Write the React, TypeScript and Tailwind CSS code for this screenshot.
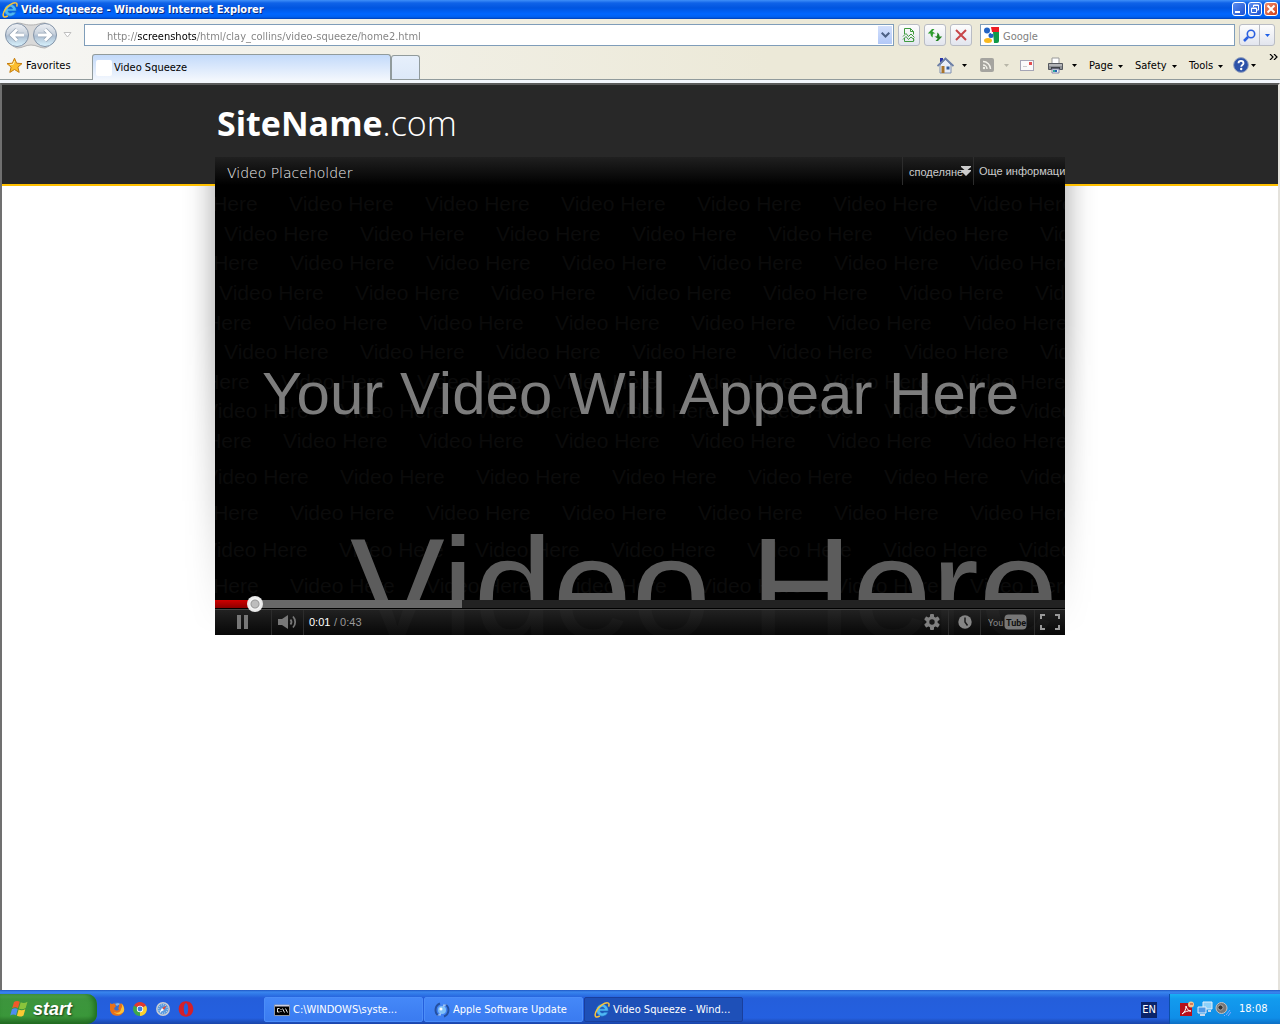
import React from "react";

const UI = "font-['DejaVu_Sans_Condensed','DejaVu_Sans',sans-serif]";

function Caret({ dim = false }: { dim?: boolean }) {
  return (
    <svg width="5" height="3" viewBox="0 0 5 3" className="shrink-0" aria-hidden="true">
      <path d="M0 0h5L2.500 3z" fill={dim ? "#b8b6a8" : "#000"} />
    </svg>
  );
}

function IeLogo({ size = 16 }: { size?: number }) {
  return (
    <svg width={size} height={size} viewBox="0 0 16 16" className="shrink-0" aria-hidden="true">
      <path d="M8.300 2.200a6 6 0 1 0 5.600 8h-3.600a2.500 2.500 0 0 1-4.300-1.200h8.300A6 6 0 0 0 8.300 2.200zM6 6.800a2.400 2.400 0 0 1 4.600 0z" fill="#4fb8f5" stroke="#1b68bd" strokeWidth=".600" />
      <path d="M14.600 4.600c.800-2 .500-3.700-1-3.800C10.400.500 5.200 4.200 2.800 8.200.900 11.400.500 14.400 2.200 15c1 .300 2.300-.300 3.600-1.200" fill="none" stroke="#f7c33c" strokeWidth="1.500" />
    </svg>
  );
}

function NavArrows() {
  return (
    <svg width="54" height="28" viewBox="0 0 54 28" aria-hidden="true">
      <defs>
        <linearGradient id="orb" x1="0" y1="0" x2="0" y2="1">
          <stop offset="0" stopColor="#eef1f5" />
          <stop offset=".45" stopColor="#c9d2dd" />
          <stop offset=".55" stopColor="#aebfd2" />
          <stop offset="1" stopColor="#d9f4ff" />
        </linearGradient>
      </defs>
      <path d="M13 2C19 2 20 4 27 4s8-2 14-2a13 13 0 0 1 0 25c-6 0-8-3-14-3s-8 3-14 3A13 13 0 0 1 13 2z" fill="#d9d9d9" stroke="#b3b3b3" />
      <circle cx="13" cy="14" r="11.500" fill="url(#orb)" stroke="#8494a8" />
      <circle cx="41" cy="14" r="11.500" fill="url(#orb)" stroke="#8494a8" />
      <path d="M20 14H8M13 8.500L7.500 14l5.500 5.500M34 14h12M41 8.500l5.500 5.500-5.500 5.500" fill="none" stroke="#94a3b4" strokeWidth="4.500" />
      <path d="M20 14H8M13 8.500L7.500 14l5.500 5.500M34 14h12M41 8.500l5.500 5.500-5.500 5.500" fill="none" stroke="#fff" strokeWidth="3" />
    </svg>
  );
}

function TitleBar() {
  const cap = "flex h-[14px] w-[14px] items-center justify-center rounded-[3px] border border-white bg-linear-to-br from-[#5a8cf0] to-[#1b4fd0]";
  return (
    <header className="flex h-[19px] shrink-0 items-center bg-[linear-gradient(#3f8ff8_0,#0f62e8_3px,#0055e0_8px,#0066ff_14px,#0060f0_17px,#0040b8)] pl-[2px] pr-[2px]">
      <IeLogo />
      <h1 className="ml-[3px] flex-1 pt-px text-[11px] leading-[18px] font-bold whitespace-nowrap text-white [text-shadow:1px_1px_0_#0a2a80]">
        Video Squeeze - Windows Internet Explorer
      </h1>
      <div className="flex gap-[2px] pb-px">
        <button aria-label="Minimize" className={cap}>
          <svg width="12" height="12" viewBox="0 0 12 12"><path d="M2 8h5v2H2z" fill="#fff" /></svg>
        </button>
        <button aria-label="Restore" className={cap}>
          <svg width="12" height="12" viewBox="0 0 12 12" fill="none" stroke="#fff"><path d="M4.500 4V2h5v5H8M2.500 5h5v4.500h-5zM4 2.500h6M2 5.500h6" /></svg>
        </button>
        <button aria-label="Close" className="flex h-[14px] w-[14px] items-center justify-center rounded-[3px] border border-white bg-linear-to-br from-[#ee8a6a] to-[#d03a10]">
          <svg width="12" height="12" viewBox="0 0 12 12"><path d="M2.500 2.500l7 7M9.500 2.500l-7 7" stroke="#fff" strokeWidth="2" /></svg>
        </button>
      </div>
    </header>
  );
}

function AddressRow() {
  const btn = "flex h-[22px] w-[22px] shrink-0 items-center justify-center rounded-[3px] border border-[#b9bcc4] bg-linear-to-b from-[#fdfdfd] to-[#e2e5ee]";
  return (
    <div className="flex h-[32px] shrink-0 items-center pr-[5px] pl-1">
      <button aria-label="Back and forward" className="shrink-0"><NavArrows /></button>
      <button aria-label="Recent pages" className="flex w-[19px] justify-center">
        <svg width="9" height="6" viewBox="0 0 9 6"><path d="M1 .500h7L4.500 5z" fill="#fff" stroke="#c0c0c0" /></svg>
      </button>
      <div className="ml-[7px] flex h-[22px] min-w-0 flex-1 items-center border border-[#7f9db9] bg-white">
        <input
          aria-label="Address"
          defaultValue="http://screenshots/html/clay_collins/video-squeeze/home2.html"
          className="h-5 min-w-0 flex-1 bg-[linear-gradient(to_right,#808080_53px,#000_53px,#000_112px,#808080_112px)] bg-clip-text pt-[2px] pl-[22px] text-[11px] text-transparent outline-none"
        />
        <button aria-label="Show address list" className="mr-px flex h-[18px] w-[14px] items-center justify-center bg-linear-to-b from-[#d3e0fc] to-[#b2c8f7]">
          <svg width="9" height="6" viewBox="0 0 9 6"><path d="M.700.700l3.800 3.800L8.300.700" fill="none" stroke="#4d6185" strokeWidth="2" /></svg>
        </button>
      </div>
      <div className="ml-1 flex gap-1">
        <button aria-label="Compatibility view" className={btn}>
          <svg width="14" height="14" viewBox="0 0 14 14" fill="none" stroke="#3f9b3f"><path d="M2.500 6V.500h6l3 3v3M8.500.500v3h3M2.500 10v3.500h9V10M1 8.500l3-3L6.500 8.500 9 6l3.500 3.500M1 11.500l3-3 2.500 3L9 9l3.500 3" /></svg>
        </button>
        <button aria-label="Refresh" className={btn}>
          <svg width="16" height="16" viewBox="0 0 16 16"><path d="M5 2L.800 6.500h2.700c0 2 .500 3 2.500 4-.800-2 0-3.200.500-4h2L5.300 4.500 7.500 2z" fill="#2f9e2f" /><path d="M11 14l4.200-4.500h-2.700c0-2-.500-3-2.500-4 .800 2 0 3.200-.500 4h-2L10.700 11.500 8.500 14z" fill="#228422" /></svg>
        </button>
        <button aria-label="Stop" className={btn}>
          <svg width="12" height="12" viewBox="0 0 12 12"><path d="M1 1l10 10M11 1L1 11" stroke="#c7464a" strokeWidth="2" /></svg>
        </button>
      </div>
      <div className="ml-2 flex h-[22px] w-[255px] items-center border border-[#7f9db9] bg-white pl-[2px]">
        <svg width="16" height="16" viewBox="0 0 16 16" className="shrink-0" aria-hidden="true">
          <path d="M8 0h8v5H9z" fill="#ee1c25" /><path d="M10 5h6v9a2 2 0 0 1-2 2h-3z" fill="#109a48" />
          <circle cx="4" cy="3.500" r="3" fill="#2163c4" /><circle cx="8" cy="8.500" r="2.500" fill="#2163c4" /><ellipse cx="5" cy="13.500" rx="4" ry="2.500" fill="#f9b91e" />
          <circle cx="9" cy="6" r="1" fill="#fff" />
        </svg>
        <input aria-label="Search" placeholder="Google" className="ml-1 h-5 min-w-0 flex-1 pt-[2px] text-[11px] outline-none placeholder:text-[#808080]" />
      </div>
      <div className="ml-1 flex h-[22px] w-[36px] rounded-[3px] border border-[#b9bcc4] bg-linear-to-b from-[#fdfdfd] to-[#e2e5ee]">
        <button aria-label="Go" className="flex flex-1 items-center justify-center border-r border-[#b9bcc4]">
          <svg width="13" height="13" viewBox="0 0 13 13" fill="none" stroke="#2a5fe0"><circle cx="8" cy="5" r="3.700" strokeWidth="1.600" /><path d="M5 8l-4 4" strokeWidth="2.500" /></svg>
        </button>
        <button aria-label="Search providers" className="flex w-[14px] items-center justify-center">
          <svg width="5" height="3" viewBox="0 0 5 3"><path d="M0 0h5L2.500 3z" fill="#1c5fe8" /></svg>
        </button>
      </div>
    </div>
  );
}

function HomeIcon() {
  return (
    <svg width="17" height="17" viewBox="0 0 17 17" aria-hidden="true">
      <path d="M3 1h3v4H3z" fill="#2733a8" /><path d="M3 8l5.500-6L14 8v8H3z" fill="#e8edf8" stroke="#8090b0" />
      <path d="M.500 9L8.500 1.500l8 7.500" fill="none" stroke="#6c7fa6" strokeWidth="1.800" />
      <path d="M4.500 9h3v7h-3z" fill="#a8742c" /><path d="M9.500 9.500h3v3h-3z" fill="#315a9c" />
    </svg>
  );
}

function PrinterIcon() {
  return (
    <svg width="17" height="17" viewBox="0 0 17 17" aria-hidden="true">
      <path d="M5 1h7v6H5z" fill="#fff" stroke="#999" /><path d="M1.500 6.500h14v6h-14z" fill="#8e9196" stroke="#55585e" />
      <path d="M2 8h13" stroke="#d8d8d8" /><path d="M4 10h9v2H4z" fill="#3f4247" /><path d="M5 12h7v4H5z" fill="#eef6f6" stroke="#88a" /><path d="M6 13h2v2H6z" fill="#2aa89a" /><path d="M8 13h2v2H8z" fill="#2763b4" />
    </svg>
  );
}

function TabRow() {
  const menu = "flex h-6 items-center gap-[5px] whitespace-nowrap pt-[2px]";
  return (
    <div className="relative flex h-[29px] shrink-0 items-end border-b border-[#919b9c]">
      <button className="flex h-[27px] w-[92px] shrink-0 items-center gap-[3px] pl-[6px]">
        <svg width="17" height="17" viewBox="0 0 17 17" aria-hidden="true"><path d="M8.500 1.200l2.100 5 5.400.400-4.100 3.500 1.300 5.300-4.700-2.900-4.700 2.900 1.300-5.300L1 6.600l5.400-.400z" fill="#fcbe2e" stroke="#c57c0e" strokeLinejoin="round" /><path d="M8.500 4L7.200 7.300 4 7.600" stroke="#fff2b0" fill="none" /></svg>
        <span className="pt-px">Favorites</span>
      </button>
      <button className="-mb-px flex h-[26px] w-[299px] items-center gap-[2px] rounded-t-[3px] border border-b-0 border-[#919b9c] bg-linear-to-b from-[#c3dafa] to-[#f3f7fd] pl-[3px]">
        <span className="h-4 w-4 rounded-[2px] bg-white" />
        <span className="pt-px">Video Squeeze</span>
      </button>
      <button aria-label="New tab" className="h-[24px] w-[29px] rounded-t-[3px] border border-b-0 border-[#919b9c] bg-linear-to-b from-[#e6effb] to-[#dde9f8]" />
      <nav className="ml-auto flex h-[28px] items-center pr-[24px]">
        <button aria-label="Home" className="flex w-[43px] items-center gap-2"><HomeIcon /><Caret /></button>
        <button aria-label="Feeds" className="flex w-[40px] items-center gap-[10px]">
          <svg width="14" height="14" viewBox="0 0 14 14"><rect width="14" height="14" rx="2" fill="#a5a49f" /><g fill="none" stroke="#f2f1ea" strokeWidth="1.500"><path d="M3 7a4 4 0 0 1 4 4M3 3.500a7.500 7.500 0 0 1 7.500 7.500" /></g><circle cx="4" cy="10" r="1.200" fill="#f2f1ea" /></svg>
          <Caret dim />
        </button>
        <button aria-label="Read mail" className="w-[27px]">
          <svg width="14" height="11" viewBox="0 0 14 11"><rect x=".500" y=".500" width="13" height="10" fill="#fafafa" stroke="#a5a5b5" /><path d="M9 2h3v3H9z" fill="#e25050" /><path d="M3 6.500h4" stroke="#ccc" /></svg>
        </button>
        <button aria-label="Print" className="flex w-[42px] items-center gap-2"><PrinterIcon /><Caret /></button>
        <button className={menu + " w-[46px]"}>Page <Caret /></button>
        <button className={menu + " w-[54px]"}>Safety <Caret /></button>
        <button className={menu + " w-[44px]"}>Tools <Caret /></button>
        <button aria-label="Help" className="flex w-[23px] items-center gap-[2px]">
          <svg width="16" height="16" viewBox="0 0 16 16" className="shrink-0"><circle cx="8" cy="8" r="7.400" fill="#2c52a8" stroke="#9aa6bf" /><path d="M5.500 6.200c0-3.200 5-3.200 5 0 0 1.900-2.300 1.700-2.300 3.600" fill="none" stroke="#fff" strokeWidth="1.800" /><circle cx="8.200" cy="12" r="1.200" fill="#fff" /></svg>
          <Caret />
        </button>
      </nav>
      <button aria-label="More commands" className="absolute top-[3px] right-[2px]">
        <svg width="9" height="6" viewBox="0 0 9 6" fill="none" stroke="#000" strokeWidth="1.200"><path d="M1 0l3 3-3 3M5 0l3 3-3 3" /></svg>
      </button>
    </div>
  );
}

const upperRows = ["-ml-[62px]", "ml-[9px]", "-ml-[61px]", "ml-[4px]", "-ml-[68px]", "ml-[9px]", "-ml-[70px]", "-ml-[11px]", "-ml-[68px]"];
const lowerRows = ["-ml-[11px]", "-ml-[61px]", "-ml-[12px]", "-ml-[61px]"];

function WatermarkRow({ shift }: { shift: string }) {
  return (
    <div className={"flex h-6 " + shift}>
      {Array.from({ length: 7 }, (_, i) => (
        <span key={i} className="w-[136px] shrink-0 whitespace-nowrap">Video Here</span>
      ))}
    </div>
  );
}

function Player() {
  const ctl = "flex h-full items-center justify-center border-l border-[#2c2c2c] pb-[2px]";
  return (
    <section aria-label="Video player" className="relative z-10 mx-auto -mt-[29px] h-[478px] w-full max-w-[850px] font-['Liberation_Sans',sans-serif]">
      <div className="absolute top-[29px] bottom-0 -left-[34px] w-[34px] bg-[linear-gradient(to_left,rgba(0,0,0,.19),rgba(0,0,0,.08)_35%,rgba(0,0,0,.02)_65%,transparent)] [mask-image:linear-gradient(#000_30%,rgba(0,0,0,.5)_70%,transparent)]" />
      <div className="absolute top-[29px] -right-[34px] bottom-0 w-[34px] bg-[linear-gradient(to_right,rgba(0,0,0,.19),rgba(0,0,0,.08)_35%,rgba(0,0,0,.02)_65%,transparent)] [mask-image:linear-gradient(#000_30%,rgba(0,0,0,.5)_70%,transparent)]" />
      <div className="relative flex h-full flex-col overflow-hidden bg-black">
        <div aria-hidden="true" className="absolute inset-x-0 top-[35px] overflow-hidden text-[21px] leading-6 text-[#0b0b0b]">
          <div className="flex h-[261px] flex-col justify-between">
            {upperRows.map((s, i) => <WatermarkRow key={i} shift={s} />)}
          </div>
          <div className="mt-3 flex h-[133px] flex-col justify-between">
            {lowerRows.map((s, i) => <WatermarkRow key={i} shift={s} />)}
          </div>
        </div>
        <p className="absolute top-[203px] left-[47px] text-[60px] leading-[68px] whitespace-nowrap text-[#7d7d7d]">Your Video Will Appear Here</p>
        <p className="absolute top-[352px] left-[135px] text-[142px] leading-[160px] whitespace-nowrap text-[#5c5c5c]">Video Here</p>

        <div className="relative flex h-[28px] items-center bg-linear-to-b from-[#202020] to-transparent text-[11px] text-[#ccc]">
          <h2 className="flex-1 pt-1 pl-3 font-['DejaVu_Sans',sans-serif] text-[14px] font-extralight text-[#f0f0f0]">Video Placeholder</h2>
          <button className="flex h-full w-[71px] shrink-0 items-center border-l border-[#2c2c2c] pt-[2px] pl-[6px]">
            <span className="w-[52px]">споделяне</span>
            <svg width="10" height="10" viewBox="0 0 10 10" className="mb-[3px] shrink-0" aria-hidden="true"><path d="M0 0h10v1L6.500 4H10v1L5 10 0 5V4h3.500L0 1z" fill="#ccc" /></svg>
          </button>
          <button className="h-full w-[92px] shrink-0 overflow-hidden border-l border-[#2c2c2c] pl-[5px] text-left whitespace-nowrap">Още информация</button>
        </div>

        <div className="relative mt-auto">
          <input
            type="range"
            aria-label="Seek"
            min={0}
            max={1000}
            defaultValue={38}
            className="block h-2 w-full appearance-none bg-[linear-gradient(to_right,transparent_40px,#686868_40px,#686868_247px,#222_247px),linear-gradient(#d00000,#8a0000)] [&::-webkit-slider-thumb]:h-4 [&::-webkit-slider-thumb]:w-4 [&::-webkit-slider-thumb]:appearance-none [&::-webkit-slider-thumb]:rounded-full [&::-webkit-slider-thumb]:bg-[radial-gradient(circle,#bdbdbd_0,#bdbdbd_3px,#999_4px,#f4f4f4_5px,#e4e4e4_8px)]"
          />
          <div className="h-px bg-black" />
          <div className="flex h-[26px] items-center border-t border-[#444] bg-linear-to-b from-[#232323]/95 to-[#080808]/95">
            <button aria-label="Pause" className="flex h-full w-[56px] items-center justify-center pb-[2px]">
              <svg width="12" height="14" viewBox="0 0 12 14"><path d="M0 0h4v14H0zM7 0h4v14H7z" fill="#777" /></svg>
            </button>
            <button aria-label="Mute" className={ctl + " w-[32px]"}>
              <svg width="20" height="14" viewBox="0 0 20 14"><path d="M0 4h4l6-4v14l-6-4H0z" fill="#777" /><path d="M12.500 4.500a4 4 0 0 1 0 5M15 1.500a8 8 0 0 1 0 11" fill="none" stroke="#777" strokeWidth="1.800" /></svg>
            </button>
            <div className="flex h-full items-center border-l border-[#2c2c2c] pl-[5px] text-[11px]">
              <span className="w-[25px] text-white">0:01</span><span className="text-[#999]">/ 0:43</span>
            </div>
            <button aria-label="Settings" className="ml-auto flex h-full w-[33px] items-center justify-center pb-[2px]">
              <svg width="16" height="16" viewBox="-8 -8 16 16"><g fill="#808080"><circle r="5.700" />{[0, 60, 120].map((a) => <rect key={a} x="-2" y="-8" width="4" height="16" rx="1" transform={`rotate(${a})`} />)}</g><circle r="2.700" fill="#181818" /></svg>
            </button>
            <button aria-label="Watch later" className={ctl + " w-[32px]"}>
              <svg width="14" height="14" viewBox="0 0 14 14"><circle cx="7" cy="7" r="6.700" fill="#858585" /><path d="M7 2.500V7l2.500 3.500" fill="none" stroke="#1a1a1a" strokeWidth="1.500" /></svg>
            </button>
            <button aria-label="YouTube" className={ctl + " w-[54px]"}>
              <svg width="39" height="16" viewBox="0 0 39 16">
                <rect x="16.500" y=".500" width="22" height="15" rx="4" fill="#777" />
                <g fontFamily="Roboto" fontSize="9">
                  <text x="0" y="12" fill="#8a8a8a">You</text>
                  <text x="18" y="12" fill="#111" fontWeight="700">Tube</text>
                </g>
              </svg>
            </button>
            <button aria-label="Full screen" className={ctl + " w-[31px]"}>
              <svg width="20" height="16" viewBox="0 0 20 16"><path d="M1 5V1h4M15 1h4v4M19 11v4h-4M5 15H1v-4" fill="none" stroke="#999" strokeWidth="2" /></svg>
            </button>
          </div>
        </div>
      </div>
    </section>
  );
}

function Page() {
  return (
    <main className="flex-1 overflow-hidden border-x-2 border-t-2 border-t-[#5a5a5a] border-r-[#e4e2dc] border-l-[#707070] bg-white">
      <div className="h-[101px] border-b-2 border-[#ffc000] bg-[#282828]">
        <div className="mx-auto max-w-[850px] pt-3 pl-[2px] font-['Open_Sans',sans-serif] text-[34px] leading-[52px] text-white">
          <a href="#home"><span className="font-bold">SiteName</span><span className="font-light">.com</span></a>
        </div>
      </div>
      <Player />
    </main>
  );
}

function StartFlag() {
  return (
    <svg width="19" height="18" viewBox="0 0 19 18" aria-hidden="true">
      <path d="M4 2c2-1.500 4-1.400 5.800-.200L8 8c-2-1.200-3.800-1-5.800.200z" fill="#f0592b" />
      <path d="M10.700 2.300c2 1.200 4.200 1 6.800-.500L15.700 8c-2.300 1.400-4.600 1.600-6.800.500z" fill="#8ac43c" />
      <path d="M1.900 9.300c2-1.300 4-1.400 5.800-.200L6 15.300c-1.800-1.100-3.800-1-5.800.300z" fill="#4f8df0" />
      <path d="M8.600 9.600c2.200 1.100 4.400.900 6.700-.400l-1.800 6.200c-2.200 1.400-4.400 1.600-6.600.400z" fill="#fbc934" />
    </svg>
  );
}

function Taskbar() {
  const task = "flex h-[25px] w-[159px] items-center gap-[3px] rounded-[2px] border pl-[9px] text-white whitespace-nowrap";
  return (
    <footer className="flex h-[34px] shrink-0 items-end bg-[linear-gradient(#1f57c4_0,#3a86ee_2px,#3079e8_4px,#245edb_8px,#2460e0_28px,#1a45a8)]">
      <button className="flex h-[30px] w-[97px] shrink-0 items-center gap-1 rounded-r-[10px] bg-[linear-gradient(#5aa85a_0,#3d953d_5px,#3a973a_22px,#246824)] pl-[10px] font-['Liberation_Sans',sans-serif] text-[18px] font-bold text-white italic shadow-[inset_-3px_0_5px_#1f6f1f] [text-shadow:1px_1px_2px_#1a401a]">
        <StartFlag />
        start
      </button>
      <nav aria-label="Quick launch" className="flex h-[30px] w-[167px] shrink-0 items-center gap-[7px] pl-3">
        <button aria-label="Firefox">
          <svg width="16" height="16" viewBox="0 0 16 16"><circle cx="8" cy="8" r="6.800" fill="#3a6fd0" /><path d="M6 3c2-1.500 5-1 6 1-1.500-.500-3 0-4 1z" fill="#7fb4f0" /><path d="M1 4c0-2 1-2.500 1.500-1 1 0 1.700-.500 3-.500L7 5 5 7.500C6 10 9 10 10 8.500c-1-.800-1-2 0-2.500C9.500 4 11 2 12.500 2.500 15 4.500 15.500 7 15 10a7.300 7.300 0 0 1-14-1z" fill="#e8711a" /><path d="M12.500 2.500c1 2 .500 4-.500 5.500 0 3-4 5-7 3 2 3 8 3 10-1 .500-2 0-5-2.500-7.500z" fill="#fbc33a" /></svg>
        </button>
        <button aria-label="Chrome">
          <svg width="16" height="16" viewBox="0 0 16 16"><path d="M8 8L2 4.400A7 7 0 0 1 14 4.500z" fill="#e23a2e" /><path d="M8 8l6-3.500A7 7 0 0 1 8 15z" fill="#fcd02e" /><path d="M8 8v7A7 7 0 0 1 2 4.400z" fill="#3ea84a" /><circle cx="8" cy="8" r="3.200" fill="#fff" /><circle cx="8" cy="8" r="2.400" fill="#3f7fe0" /></svg>
        </button>
        <button aria-label="Safari">
          <svg width="16" height="16" viewBox="0 0 16 16"><circle cx="8" cy="8" r="6.200" fill="#5a9be0" stroke="#c8ccd2" strokeWidth="1.500" /><circle cx="8" cy="8" r="4.300" fill="none" stroke="#cfe2f6" strokeDasharray="1 1.200" /><path d="M11.500 4.500L9 9 7 7z" fill="#e04a3a" /><path d="M4.500 11.500L7 7l2 2z" fill="#fff" /></svg>
        </button>
        <button aria-label="Opera">
          <svg width="16" height="16" viewBox="0 0 16 16"><path fillRule="evenodd" d="M8 .300c4.500 0 7.300 3.400 7.300 7.700S12.500 15.700 8 15.700.700 12.300.700 8 3.500.300 8 .300zM8 2.300C6.500 2.300 5.800 5 5.800 8s.700 5.700 2.200 5.700 2.200-2.700 2.200-5.700S9.500 2.300 8 2.300z" fill="#d3202a" /></svg>
        </button>
      </nav>
      <div className="mb-[2px] flex min-w-0 flex-1 gap-px">
        <button className={task + " border-[#4b8df8] bg-linear-to-b from-[#4588f8] to-[#3a7bf0]"}>
          <svg width="16" height="16" viewBox="0 0 16 16" aria-hidden="true"><path d="M.500 3h15v10.500H.500z" fill="#000" stroke="#aaa" strokeWidth=".800" /><path d="M1 3h14v1.500H1z" fill="#ccd" /><path d="M5.500 6.500h-2v3.500h2M7 7v1M7 9v1M8.500 6.500l2 4M11.500 6.500l2 4" stroke="#fff" fill="none" strokeWidth=".900" /></svg>
          <span className="pt-px">C:\WINDOWS\syste...</span>
        </button>
        <button className={task + " border-[#4b8df8] bg-linear-to-b from-[#4588f8] to-[#3a7bf0]"}>
          <svg width="16" height="16" viewBox="0 0 16 16" aria-hidden="true"><circle cx="8" cy="8" r="4" fill="#7fc0f8" /><path d="M6 1.500a6.800 6.800 0 0 0-1.500 12M10 14.500a6.800 6.800 0 0 0 1.500-12" fill="none" stroke="#2450a0" strokeWidth="2" /><path d="M3 13.500h4v-3zM13 2.500H9v3z" fill="#9fc4f4" /><circle cx="7" cy="7" r="1.500" fill="#fff" /></svg>
          <span className="pt-px">Apple Software Update</span>
        </button>
        <button aria-pressed="true" className={task + " border-[#1a3f9c] bg-[#1e50b8]"}>
          <IeLogo />
          <span className="pt-px">Video Squeeze - Wind...</span>
        </button>
      </div>
      <span className="mb-[6px] mr-[12px] bg-[#0a246a] px-px text-[11px] leading-[16px] text-white">EN</span>
      <div className="flex h-[30px] w-[111px] shrink-0 items-center gap-[2px] border-l border-[#0a4fa8] bg-[linear-gradient(#18b0f4_0,#129bee_5px,#0f8ee8_24px,#0d6fc4)] pl-[9px] text-white">
        <svg width="16" height="16" viewBox="0 0 16 16" aria-hidden="true"><path d="M1 2h12v13H1z" fill="#b8101a" /><path d="M3 13c3-2 4-5 4-8 1 3 2 5 5 5-3-.500-6 .500-9 3z" fill="none" stroke="#fff" /><circle cx="12" cy="3.500" r="3" fill="#f3c890" /><path d="M11 3h3" stroke="#c03020" /></svg>
        <svg width="16" height="16" viewBox="0 0 16 16" aria-hidden="true"><path d="M6 1h9v7H6z" fill="#8cd0fa" stroke="#e4eef8" /><path d="M1 6h8v6H1z" fill="#4f9ae8" stroke="#e4eef8" /><path d="M3 14h5M11 10h3" stroke="#c8d8ec" strokeWidth="2" /></svg>
        <svg width="16" height="16" viewBox="0 0 16 16" aria-hidden="true"><circle cx="6.500" cy="7" r="5.500" fill="#777" stroke="#c4c4c4" /><circle cx="5.500" cy="6.500" r="2.600" fill="#333" stroke="#aaa" /><path d="M11 14l4-5M9 15l1-1M13 15l3-4" stroke="#7fa8ff" /></svg>
        <time className="ml-[6px] pt-px">18:08</time>
      </div>
    </footer>
  );
}

export default function App() {
  return (
    <div className={"flex h-screen flex-col overflow-hidden bg-[#ece9d8] text-[11px] text-black " + UI}>
      <TitleBar />
      <div className="shrink-0 bg-[linear-gradient(to_right,#f6f6f4,#ece9d8_60%)]">
        <AddressRow />
        <TabRow />
      </div>
      <div className="h-[3px] shrink-0 bg-[#f3f6fc]" />
      <Page />
      <Taskbar />
    </div>
  );
}
